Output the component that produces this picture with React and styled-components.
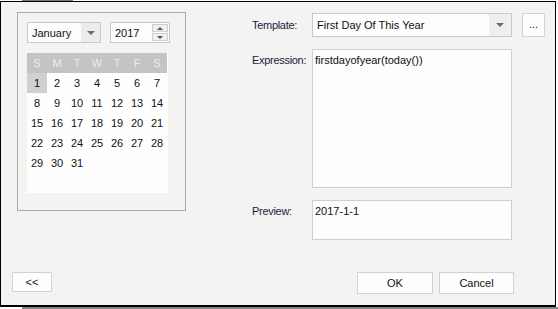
import React from "react";
import styled, { createGlobalStyle } from "styled-components";

const Global = createGlobalStyle`
  html, body { margin: 0; padding: 0; background: #ffffff; }
  body { font-family: "Liberation Sans", Arial, sans-serif; font-size: 11px; color: #1b1b2e; }
  * { box-sizing: border-box; }
`;

const Page = styled.div`
  width: 558px;
  height: 309px;
  display: flex;
  flex-direction: column;
  background: #ffffff;
  overflow: hidden;
`;

const TopStrip = styled.div`
  margin-left: 22px;
  width: 51px;
  height: 1px;
  background: #7a7a7a;
  flex: none;
`;

const Window = styled.div`
  width: 556px;
  height: 306px;
  flex: none;
  border: 1px solid #000;
  border-bottom-width: 2px;
  background: #f3f4f2;
  display: flex;
  flex-direction: column;
`;

const BottomShadow = styled.div`
  margin-left: 22px;
  height: 2px;
  background: #858585;
  flex: none;
`;

const Main = styled.div`
  display: flex;
  padding: 10px 0 0 16px;
  height: 209px;
`;

const GroupBox = styled.div`
  width: 169px;
  height: 199px;
  border: 1px solid #a9aaa9;
  padding: 9px 0 0 9px;
  display: flex;
  flex-direction: column;
  gap: 10px;
`;

const Selectors = styled.div`
  display: flex;
  gap: 9px;
`;

const Select = styled.div`
  width: ${(p) => p.$w}px;
  height: 21px;
  border: 1px solid #c9c9c9;
  background: #fcfdfc;
  display: flex;
  align-items: center;
`;

const SelectText = styled.div`
  flex: 1;
  padding-left: ${(p) => p.$pad || 4}px;
  color: #111;
  font-size: ${(p) => p.$fs || 11}px;
  white-space: nowrap;
`;

const ArrowBox = styled.div`
  width: ${(p) => p.$w}px;
  align-self: stretch;
  background: ${(p) => p.$bg || "#eeeeee"};
  display: flex;
  align-items: center;
  justify-content: center;
`;

const Tri = styled.div`
  width: 0;
  height: 0;
  border-left: ${(p) => p.$s}px solid transparent;
  border-right: ${(p) => p.$s}px solid transparent;
  ${(p) => (p.$up ? "border-bottom" : "border-top")}: ${(p) => p.$h}px solid ${(p) => p.$c || "#6a6a6a"};
`;

const Spin = styled.div`
  width: 16px;
  align-self: stretch;
  display: flex;
  flex-direction: column;
  gap: 1px;
  padding: 1px 0;
  margin-right: 1px;
`;

const SpinBtn = styled.div`
  flex: 1;
  border: 1px solid #d0d0d0;
  background: #f0f0f0;
  display: flex;
  align-items: center;
  justify-content: center;
`;

const Calendar = styled.div`
  width: 141px;
  display: grid;
  grid-template-columns: repeat(7, 20px);
  grid-auto-rows: 20px;
  background: #fdfefd;
  height: 140px;
`;

const HeadCell = styled.div`
  background: #c6c3c6;
  color: #ecebec;
  display: flex;
  align-items: center;
  justify-content: center;
  font-size: 11px;
  &:last-child { margin-right: -1px; }
`;

const DayCell = styled.div`
  display: flex;
  align-items: center;
  justify-content: center;
  color: #111;
  font-size: 11px;
  background: ${(p) => (p.$sel ? "#cfd0cf" : "transparent")};
`;

const Right = styled.div`
  margin-left: 66px;
  padding-top: 1px;
  display: grid;
  grid-template-columns: 60px 200px 10px 23px;
  grid-template-rows: 24px 139px 40px;
  row-gap: 12px;
  align-content: start;
`;

const Label = styled.div`
  color: #1b1b3a;
  font-size: 11px;
  letter-spacing: -0.3px;
  align-self: ${(p) => (p.$top ? "start" : "center")};
  padding-top: ${(p) => (p.$top ? 5 : 0)}px;
  white-space: nowrap;
`;

const Combo = styled.div`
  border: 1px solid #c9c9c9;
  background: #fcfdfc;
  display: flex;
  align-items: center;
`;

const TextBox = styled.div`
  border: 1px solid #cfcfcf;
  background: #fcfdfc;
  padding: 4px 2px;
  color: #111;
  font-size: 11px;
  grid-column: 2;
`;

const SmallBtn = styled.div`
  grid-column: 4;
  border: 1px solid #d2d2d2;
  background: #fcfdfc;
  display: flex;
  align-items: center;
  justify-content: center;
  color: #222;
  font-size: 11px;
  padding-bottom: 2px;
`;

const Footer = styled.div`
  margin-top: auto;
  margin-bottom: 11px;
  display: flex;
  align-items: flex-start;
  padding: 0 41px 0 11px;
`;

const Button = styled.div`
  width: ${(p) => p.$w}px;
  height: ${(p) => p.$h || 22}px;
  border: 1px solid #d2d2d2;
  background: #fcfdfc;
  display: flex;
  align-items: center;
  justify-content: center;
  color: #111;
  font-size: 11px;
  margin-left: ${(p) => p.$ml || 0}px;
`;

const days = ["S", "M", "T", "W", "T", "F", "S"];
const dates = Array.from({ length: 31 }, (_, i) => i + 1);

export default function App() {
  return (
    <>
      <Global />
      <Page>
        <TopStrip />
        <Window>
          <Main>
            <GroupBox>
              <Selectors>
                <Select $w={74}>
                  <SelectText>January</SelectText>
                  <ArrowBox $w={19} $bg="#ececec">
                    <Tri $s={4} $h={4} />
                  </ArrowBox>
                </Select>
                <Select $w={60}>
                  <SelectText $pad={4}>2017</SelectText>
                  <Spin>
                    <SpinBtn>
                      <Tri $up $s={3} $h={3} $c="#555" />
                    </SpinBtn>
                    <SpinBtn>
                      <Tri $s={3} $h={3} $c="#555" />
                    </SpinBtn>
                  </Spin>
                </Select>
              </Selectors>
              <Calendar>
                {days.map((d, i) => (
                  <HeadCell key={i}>{d}</HeadCell>
                ))}
                {dates.map((d) => (
                  <DayCell key={d} $sel={d === 1}>
                    {d}
                  </DayCell>
                ))}
              </Calendar>
            </GroupBox>
            <Right>
              <Label>Template:</Label>
              <Combo>
                <SelectText $pad={4}>First Day Of This Year</SelectText>
                <ArrowBox $w={22} $bg="#efefef">
                  <Tri $s={4} $h={4} />
                </ArrowBox>
              </Combo>
              <div />
              <SmallBtn>...</SmallBtn>
              <Label $top>Expression:</Label>
              <TextBox>firstdayofyear(today())</TextBox>
              <div />
              <div />
              <Label $top>Preview:</Label>
              <TextBox>2017-1-1</TextBox>
            </Right>
          </Main>
          <Footer>
            <Button $w={40} $h={20}>&lt;&lt;</Button>
            <Button $w={76} $ml={305}>OK</Button>
            <Button $w={75} $ml={6}>Cancel</Button>
          </Footer>
        </Window>
        <BottomShadow />
      </Page>
    </>
  );
}
